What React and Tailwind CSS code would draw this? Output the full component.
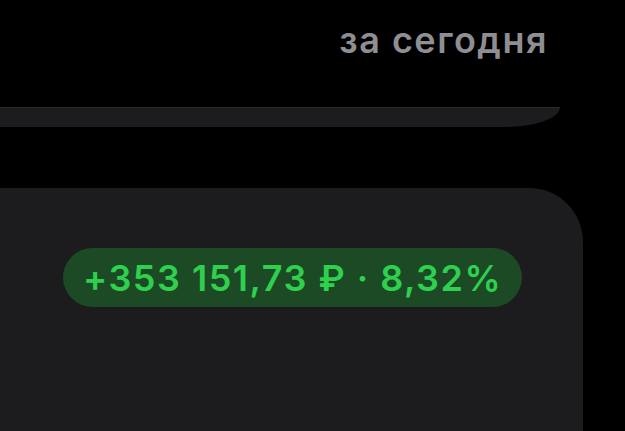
import React from 'react';

const App = () => {
  return (
    <div
      className="flex h-[431px] w-[625px] flex-col overflow-hidden bg-black"
      style={{ fontFamily: 'Inter, Roboto, "Noto Sans", sans-serif' }}
    >
      <div className="flex h-[107px] justify-end pr-[77px] pt-[18px]">
        <span className="text-[36px] font-semibold leading-[44px] tracking-[1.5px] text-[#8e8e93]">за сегодня</span>
      </div>
      <div className="h-[20px] w-[560px] rounded-br-[56px_20px] border-t border-[#2a2a2c] bg-[#1c1c1e]" />
      <div className="mt-[61px] flex w-[583px] flex-1 flex-col rounded-tr-[54px] bg-[#1c1c1e] pl-[63px] pt-[60px]">
        <div className="flex h-[59px] items-center self-start rounded-full bg-[#1b4a24] px-[20px]">
          <span className="whitespace-nowrap text-[36px] font-semibold leading-none tracking-[1.5px] text-[#2fcf4f]">
            +353 151,73 ₽ · 8,32%
          </span>
        </div>
      </div>
    </div>
  );
};

export default App;
